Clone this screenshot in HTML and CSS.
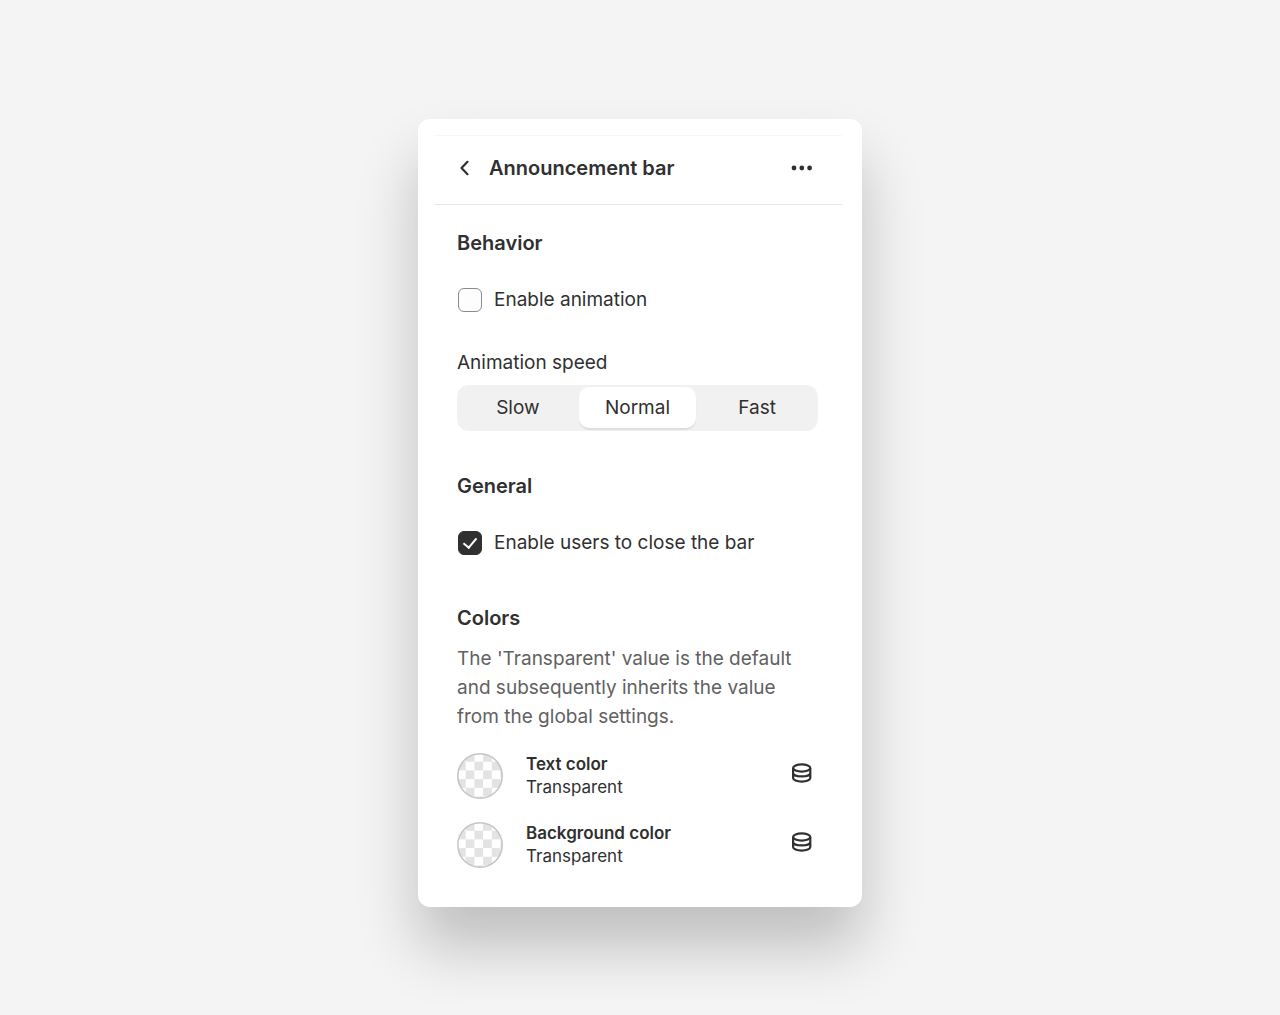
FILE: index.html
```
<!DOCTYPE html>
<html lang="en">
<head>
  <meta charset="utf-8">
  <meta name="viewport" content="width=device-width, initial-scale=1">
  <title>Announcement bar</title>
  <link rel="stylesheet" href="styles.css">
</head>
<body>
  <main class="panel">
    <header class="panel-header">
      <button class="icon-button" type="button" aria-label="Back">
        <svg width="16" height="20" viewBox="0 0 16 20" fill="none" stroke="currentColor" stroke-width="2.2" stroke-linecap="round" stroke-linejoin="round"><path d="M10.5 3.8 4.5 10l6 6.2"/></svg>
      </button>
      <h1 class="panel-title">Announcement bar</h1>
      <button class="icon-button" type="button" aria-label="More actions">
        <svg width="24" height="24" viewBox="0 0 24 24" fill="currentColor"><circle cx="4" cy="12" r="2.4"/><circle cx="11.8" cy="12" r="2.4"/><circle cx="19.6" cy="12" r="2.4"/></svg>
      </button>
    </header>

    <form class="panel-body">
      <section class="section">
        <h2 class="section-title">Behavior</h2>
        <label class="check"><input class="check-box" type="checkbox">Enable animation</label>
        <fieldset class="field">
          <legend class="field-label">Animation speed</legend>
          <div class="segments">
            <label class="segment"><input class="segment-input" type="radio" name="speed">Slow</label>
            <label class="segment"><input class="segment-input" type="radio" name="speed" checked>Normal</label>
            <label class="segment"><input class="segment-input" type="radio" name="speed">Fast</label>
          </div>
        </fieldset>
      </section>

      <section class="section">
        <h2 class="section-title">General</h2>
        <label class="check"><input class="check-box" type="checkbox" checked>Enable users to close the bar</label>
      </section>

      <section class="section">
        <h2 class="section-title">Colors</h2>
        <p class="help">The 'Transparent' value is the default and subsequently inherits the value from the global settings.</p>
        <div class="color-row">
          <button class="swatch" type="button" aria-label="Text color">
            <svg width="46" height="46" viewBox="0 0 46 46">
              <defs>
                <pattern id="checker" width="17.4" height="17.4" patternUnits="userSpaceOnUse"><path fill="#e3e3e3" d="M8.7 0h8.7v8.7H8.7zM0 8.7h8.7v8.7H0z"/></pattern>
              </defs>
              <circle cx="23" cy="23" r="22.2" fill="url(#checker)" stroke="#c4c4c4" stroke-width="1.5"/>
            </svg>
          </button>
          <div class="color-text">
            <strong class="color-name">Text color</strong>
            <span>Transparent</span>
          </div>
          <button class="icon-button source-button" type="button" aria-label="Connect dynamic source for text color">
            <svg width="24" height="24" viewBox="0 0 24 24" fill="none" stroke="currentColor" stroke-width="2.2"><ellipse cx="11.7" cy="7" rx="8.6" ry="3.6"/><path d="M3.1 7v10c0 2 3.8 3.6 8.6 3.6s8.6-1.6 8.6-3.6V7M3.1 12c0 2 3.8 3.4 8.6 3.4s8.6-1.4 8.6-3.4"/></svg>
          </button>
        </div>
        <div class="color-row">
          <button class="swatch" type="button" aria-label="Background color">
            <svg width="46" height="46" viewBox="0 0 46 46"><circle cx="23" cy="23" r="22.2" fill="url(#checker)" stroke="#c4c4c4" stroke-width="1.5"/></svg>
          </button>
          <div class="color-text">
            <strong class="color-name">Background color</strong>
            <span>Transparent</span>
          </div>
          <button class="icon-button source-button" type="button" aria-label="Connect dynamic source for background color">
            <svg width="24" height="24" viewBox="0 0 24 24" fill="none" stroke="currentColor" stroke-width="2.2"><ellipse cx="11.7" cy="7" rx="8.6" ry="3.6"/><path d="M3.1 7v10c0 2 3.8 3.6 8.6 3.6s8.6-1.6 8.6-3.6V7M3.1 12c0 2 3.8 3.4 8.6 3.4s8.6-1.4 8.6-3.4"/></svg>
          </button>
        </div>
      </section>
    </form>
  </main>
</body>
</html>
```
FILE: styles.css
```
* {
  box-sizing: border-box;
}

body {
  margin: 0;
  padding: 119px 24px 100px;
  background: #f4f4f4;
  color: #303030;
  font: 19px/28px Inter, "Liberation Sans", sans-serif;
}

.panel {
  max-width: 444px;
  margin: 0 auto;
  padding: 16px 16px 28px;
  border-radius: 12px;
  background: #fff;
  box-shadow: 0 40px 60px rgba(0, 0, 0, 0.22);
}

.panel-header {
  display: flex;
  align-items: center;
  gap: 16px;
  height: 70px;
  margin-right: 4px;
  padding: 0 28px 4px 23px;
  border-top: 1px solid #f7f7f7;
  border-bottom: 1px solid #e6e6e6;
}

.panel-title,
.section-title {
  margin: 0;
  font-size: 20px;
  font-weight: 600;
}

.panel-title {
  flex: 1;
}

.icon-button,
.swatch {
  display: flex;
  padding: 0;
  border: 0;
  background: none;
  color: inherit;
  cursor: pointer;
}

.panel-body {
  display: flex;
  flex-direction: column;
  gap: 41px;
  padding: 24px 28px 0 23px;
}

.section {
  display: flex;
  flex-direction: column;
}

.check {
  display: flex;
  align-items: center;
  gap: 12px;
  margin: 28px 0 5px;
  padding-left: 1px;
  line-height: 30px;
}

.check-box {
  appearance: none;
  display: grid;
  place-items: center;
  width: 24px;
  height: 24px;
  margin: 0;
  border: 1px solid #8a8a8a;
  border-radius: 6px;
  background: #fdfdfd;
}

.check-box:checked {
  border-color: #303030;
  background: #303030;
}

.check-box:checked::before {
  content: "";
  width: 6px;
  height: 11px;
  margin-bottom: 3px;
  border: solid #fff;
  border-width: 0 2px 2px 0;
  transform: rotate(40deg);
}

.field {
  margin: 29px 0 0;
  padding: 0;
  border: 0;
}

.field-label {
  padding: 0;
}

.segments {
  display: grid;
  grid-template-columns: repeat(3, 1fr);
  gap: 2px;
  margin-top: 8px;
  padding: 2px 2px 3px;
  border-radius: 12px;
  background: #f1f1f1;
}

.segment {
  display: grid;
  place-items: center;
  height: 41px;
  border-radius: 10px;
}

.segment:has(:checked) {
  background: #fff;
  box-shadow: 0 2px 1px rgba(0, 0, 0, 0.08);
}

.segment-input {
  position: absolute;
  opacity: 0;
}

.help {
  margin: 12px 0 10px;
  color: #616161;
  line-height: 29px;
}

.color-row {
  display: flex;
  align-items: center;
  gap: 23px;
  height: 69px;
}

.color-text {
  display: flex;
  flex: 1;
  flex-direction: column;
  font-size: 17px;
  line-height: 23px;
}

.color-name {
  font-weight: 600;
}

.source-button {
  margin: 0 4px 6px 0;
}
```
